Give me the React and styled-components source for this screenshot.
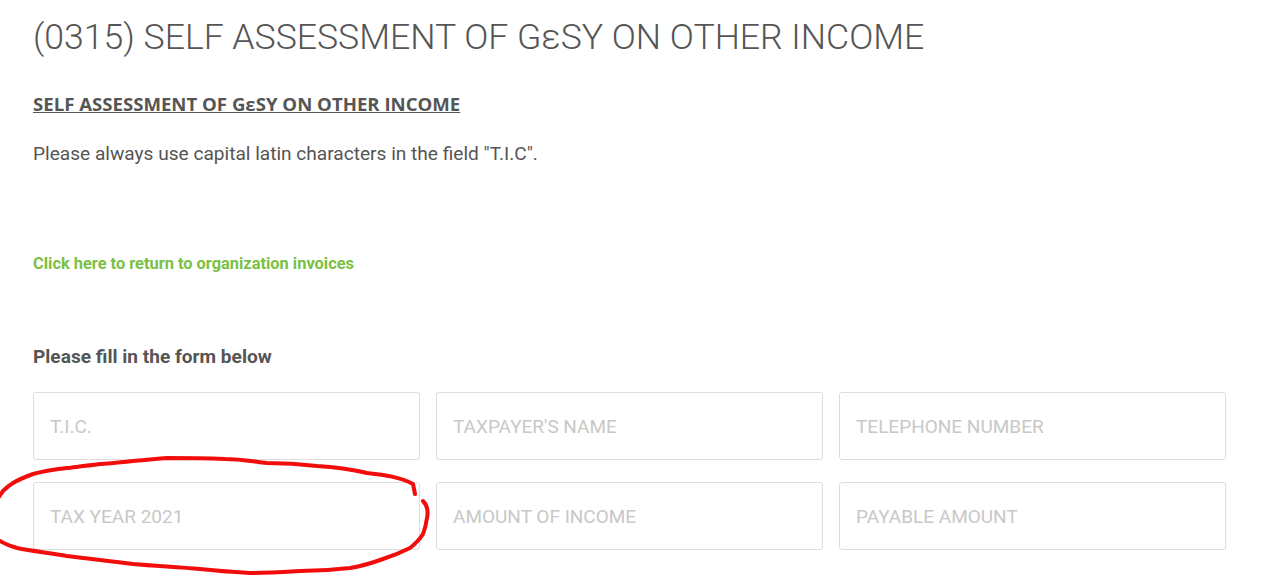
import React from 'react';
import styled, { createGlobalStyle } from 'styled-components';

const GlobalStyle = createGlobalStyle`
	body {
		margin: 0;
		background: #fff;
		font-family: Roboto, "Liberation Sans", sans-serif;
		color: #555;
	}
`;

const Page = styled.main`
	box-sizing: border-box;
	min-height: 583px;
	padding: 14px 33px 34px;
	width: 1258px;
`;

const Title = styled.h1`
	margin: 0;
	font-size: 35.6px;
	font-weight: 300;
	line-height: 46px;
	color: #555;
`;

const SubTitle = styled.h3`
	margin: 32px 0 0;
	font-family: "Open Sans", sans-serif;
	font-size: 18.6px;
	font-weight: 700;
	line-height: 24px;
	text-decoration: underline;
	color: #555;
`;

const Note = styled.p`
	margin: 26px 0 0;
	font-size: 19.1px;
	line-height: 24px;
	color: #555;
`;

const ReturnLink = styled.a`
	display: block;
	margin-top: 87px;
	font-size: 16.4px;
	font-weight: 700;
	line-height: 22px;
	color: #7ac143;
	text-decoration: none;
`;

const FormTitle = styled.h4`
	margin: 70px 0 0;
	font-size: 19.1px;
	font-weight: 700;
	line-height: 24px;
	color: #555;
`;

const FieldGrid = styled.div`
	margin-top: 23px;
	display: grid;
	grid-template-columns: repeat(3, 387px);
	column-gap: 16px;
	row-gap: 22px;
`;

const FieldCell = styled.div`
	position: relative;
	display: flex;
`;

const Field = styled.input`
	flex: 1;
	box-sizing: border-box;
	height: 68px;
	padding: 0 16px;
	border: 1px solid #ddd;
	border-radius: 3px;
	font-family: Roboto, sans-serif;
	font-size: 19px;
	color: #555;
	outline: none;

	&::placeholder {
		color: #c8c8c8;
	}
`;

// red marker scribbled over the tax year field
const Scribble = styled.svg`
	position: absolute;
	left: -33px;
	top: -26px;
	width: 432px;
	height: 122px;
	overflow: visible;
	pointer-events: none;
`;

const fields = [
	"T.I.C.",
	"TAXPAYER'S NAME",
	'TELEPHONE NUMBER',
	'TAX YEAR 2021',
	'AMOUNT OF INCOME',
	'PAYABLE AMOUNT',
];

function Marker() {
	return (
		<Scribble viewBox='0 455 432 122'>
			<g fill='none' stroke='#f20d0d' strokeWidth='4' strokeLinecap='round' strokeLinejoin='round'>
				<path d='M415 493 L413 483 C400 476 385 474 367 472 C350 468 335 466 317 465 C300 463 285 462 267 462 C250 460 240 458 225 458 C200 457 185 457 167 457 C150 458 142 460 133 460 C115 462 105 463 100 463 C85 465 75 466 67 467 C50 469 40 471 33 473 C22 477 18 479 13 482 C8 485 5 488 3 490 L-2 497' />
				<path d='M423 500 C428 505 428 512 427 517 C426 524 425 528 423 533 C420 538 415 543 410 547 C400 552 392 555 383 558 C372 562 362 565 350 567 C333 569 318 570 300 570 C283 571 268 572 250 572 C233 571 218 570 200 568 C178 566 155 565 133 563 C110 560 90 558 67 555 C50 552 32 550 17 547 C10 545 5 543 0 540' />
			</g>
		</Scribble>
	);
}

export default function App() {
	return (
		<>
			<GlobalStyle />
			<Page>
				<Title>(0315) SELF ASSESSMENT OF GεSY ON OTHER INCOME</Title>
				<SubTitle>SELF ASSESSMENT OF GεSY ON OTHER INCOME</SubTitle>
				<Note>Please always use capital latin characters in the field "T.I.C".</Note>
				<ReturnLink href='#'>Click here to return to organization invoices</ReturnLink>
				<FormTitle>Please fill in the form below</FormTitle>
				<FieldGrid>
					{fields.map((f) => (
						<FieldCell key={f}>
							<Field placeholder={f} />
							{f === 'TAX YEAR 2021' && <Marker />}
						</FieldCell>
					))}
				</FieldGrid>
			</Page>
		</>
	);
}
